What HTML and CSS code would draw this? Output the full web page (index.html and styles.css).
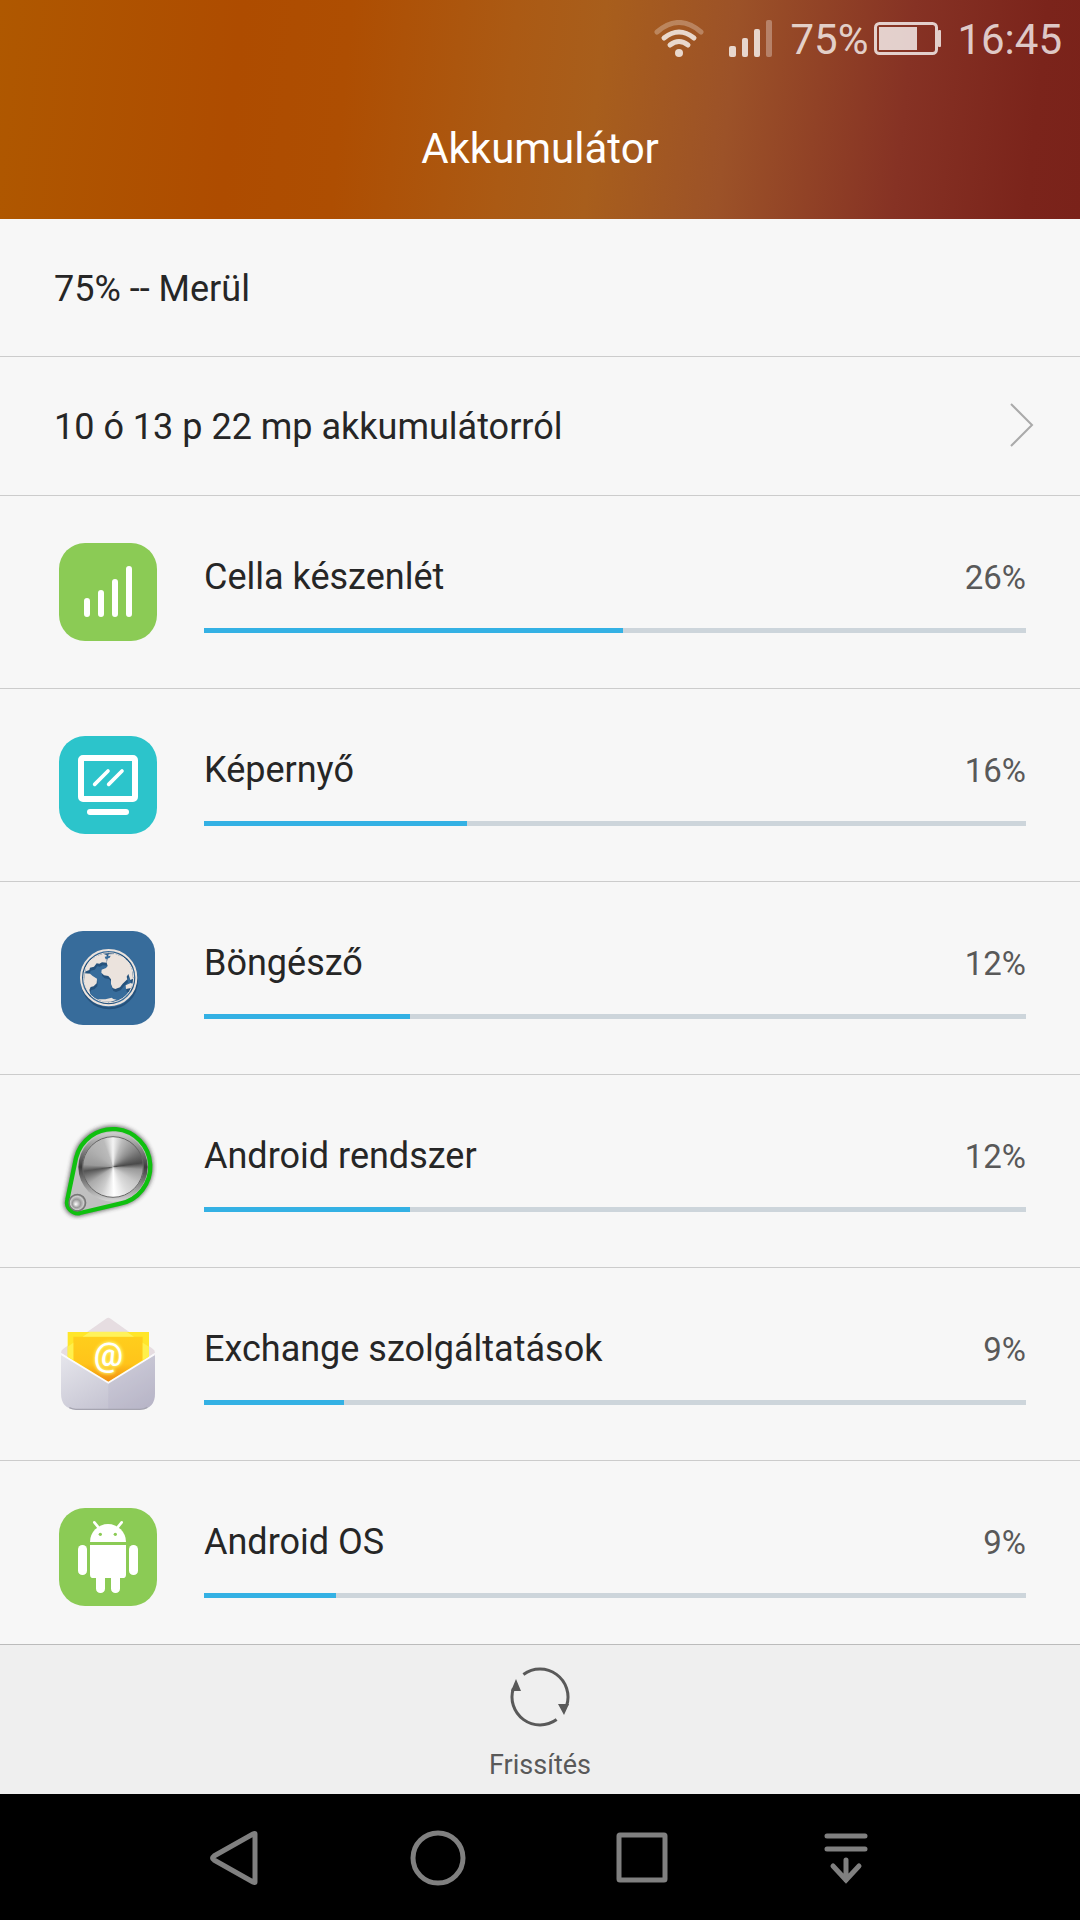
FILE: index.html
```html
<!DOCTYPE html>
<html lang="hu">
<head>
    <meta charset="UTF-8">
    <meta name="viewport" content="width=device-width, initial-scale=1.0">
    <title>Akkumulátor</title>
    <link rel="stylesheet" href="styles.css">
</head>
<body>

<header class="header">
    <div class="status-bar">
        <svg class="wifi" viewBox="0 0 50 38" fill="none" stroke="currentColor" stroke-width="5" stroke-linecap="round">
            <path d="M3 12Q25 -7 47 12" opacity=".35"/>
            <path d="M10 18Q25 6 40 18"/>
            <path d="M16 25Q25 18 34 25"/>
            <circle cx="25" cy="33" r="4" fill="currentColor" stroke="none"/>
        </svg>
        <svg class="signal" viewBox="0 0 43 38" fill="currentColor">
            <rect x="0" y="26" width="7" height="11" rx="2"/>
            <rect x="13" y="18" width="6" height="19" rx="2"/>
            <rect x="25" y="9" width="6" height="28" rx="2"/>
            <rect x="37" y="0" width="6" height="37" rx="2" opacity=".4"/>
        </svg>
        <span class="charge">75%</span>
        <svg class="battery" viewBox="0 0 67 34">
            <rect x="1.5" y="1.5" width="61" height="30" rx="4" fill="none" stroke="currentColor" stroke-width="3"/>
            <rect x="5" y="5" width="38" height="23" fill="currentColor"/>
            <rect x="64" y="8" width="3" height="17" rx="1" fill="currentColor"/>
        </svg>
        <span class="clock">16:45</span>
    </div>
    <h1>Akkumulátor</h1>
</header>

<main class="content">
    <div class="info-row">75% -- Merül</div>
    <a class="info-row history" href="#">
        10 ó 13 p 22 mp akkumulátorról
        <svg class="chevron" viewBox="0 0 24 44" fill="none" stroke="#aaa" stroke-width="2">
            <path d="M1 1L22 22L1 43"/>
        </svg>
    </a>

    <a class="usage-row" href="#">
        <svg class="app-icon" viewBox="0 0 294 294">
            <rect width="294" height="294" rx="78" fill="#8bcb55"/>
            <path d="M84 174V213M126 150V213M168 117V213M210 78V213" stroke="#fff" stroke-width="18" stroke-linecap="round"/>
        </svg>
        <div class="usage">
            <div class="usage-text"><span>Cella készenlét</span><span class="percent">26%</span></div>
            <div class="bar"><div class="bar-fill" style="width: 51%"></div></div>
        </div>
    </a>

    <a class="usage-row" href="#">
        <svg class="app-icon" viewBox="0 0 294 294" stroke-linecap="round">
            <rect width="294" height="294" rx="78" fill="#2cc4cb"/>
            <rect x="66" y="66" width="162" height="123" rx="6" fill="none" stroke="#fff" stroke-width="18"/>
            <path d="M107 145L147 105M149 145L189 105" stroke="#fff" stroke-width="11"/>
            <path d="M93 228H201" stroke="#fff" stroke-width="18"/>
        </svg>
        <div class="usage">
            <div class="usage-text"><span>Képernyő</span><span class="percent">16%</span></div>
            <div class="bar"><div class="bar-fill" style="width: 32%"></div></div>
        </div>
    </a>

    <a class="usage-row" href="#">
        <svg class="app-icon" viewBox="0 0 294 294">
            <defs>
                <g id="globe">
                    <circle cx="206" cy="203" r="83" fill="none" stroke-width="6"/>
                    <circle cx="206" cy="203" r="75" fill="none" stroke-width="3"/>
                    <path stroke="none" d="M136 190L137 172L149 152L168 139L190 131L200 136L200 158L186 157L178 161L170 160L162 170L150 173L148 180L138 184Z"/>
                    <path stroke="none" d="M134 190L150 191L158 198L171 206L170 220L161 229L152 231L148 240L151 252L144 246L137 232L132 215Z"/>
                    <path stroke="none" d="M206 133L226 132L250 142L268 160L277 182L279 206L271 210L265 192L260 200L262 208L248 221L240 232L226 237L218 234L213 222L213 208L205 198L192 196L184 188L185 179L198 174L203 168L200 158Z"/>
                    <path stroke="none" d="M257 226L272 219L278 222L273 234L258 237Z"/>
                    <path stroke="none" d="M172 268L196 268L215 263L220 267L230 269L212 275L190 275Z"/>
                </g>
            </defs>
            <rect x="6" y="6" width="282" height="282" rx="66" fill="#376c9b"/>
            <g transform="translate(-57 -57)">
                <use href="#globe" x="2" y="9" fill="#25527c" stroke="#25527c"/>
                <use href="#globe" fill="#ebe3dd" stroke="#ebe3dd"/>
                <path d="M194 140L212 137L209 143L197 148Z" fill="#376c9b"/>
            </g>
        </svg>
        <div class="usage">
            <div class="usage-text"><span>Böngésző</span><span class="percent">12%</span></div>
            <div class="bar"><div class="bar-fill" style="width: 25%"></div></div>
        </div>
    </a>

    <a class="usage-row" href="#">
        <svg class="app-icon" viewBox="0 0 294 294">
            <defs>
                <filter id="soft"><feGaussianBlur stdDeviation="6"/></filter>
                <linearGradient id="rim" x1="0" y1="0" x2="0" y2="1">
                    <stop offset="0" stop-color="#d0d0d0"/>
                    <stop offset=".5" stop-color="#3c3c3c"/>
                    <stop offset="1" stop-color="#d8d8d8"/>
                </linearGradient>
                <radialGradient id="knob" cx=".5" cy=".5" r=".5" fx=".4" fy=".6">
                    <stop offset="0" stop-color="#fff"/>
                    <stop offset=".5" stop-color="#999"/>
                    <stop offset=".8" stop-color="#ccc"/>
                    <stop offset="1" stop-color="#666"/>
                </radialGradient>
            </defs>
            <g transform="translate(-57 -66)">
                <path d="M106 172A115 115 0 1 1 240 312L120 341A33 33 0 0 1 80 300Z" fill="#333" stroke="#333" stroke-width="14" opacity=".7" filter="url(#soft)"/>
                <path d="M108 174A113 113 0 1 1 240 311L120 339A33 33 0 0 1 82 299Z" fill="#c0c0c0" stroke="#0fc00f" stroke-width="13"/>
                <circle cx="219" cy="201" r="104" fill="url(#rim)"/>
                <foreignObject x="127" y="109" width="184" height="184">
                    <div class="disc"></div>
                </foreignObject>
                <circle cx="219" cy="201" r="91" fill="none" stroke="#666" stroke-width="3"/>
                <circle cx="112" cy="308" r="25" fill="url(#knob)" stroke="#777" stroke-width="4"/>
            </g>
        </svg>
        <div class="usage">
            <div class="usage-text"><span>Android rendszer</span><span class="percent">12%</span></div>
            <div class="bar"><div class="bar-fill" style="width: 25%"></div></div>
        </div>
    </a>

    <a class="usage-row" href="#">
        <svg class="app-icon" viewBox="0 0 294 294">
            <defs>
                <linearGradient id="envelope" x1="0" y1="0" x2="1" y2="1">
                    <stop offset="0" stop-color="#e6e6ec"/>
                    <stop offset="1" stop-color="#b9b7c8"/>
                </linearGradient>
                <linearGradient id="letter" x1="0" y1="0" x2="0" y2="1">
                    <stop offset="0" stop-color="#ffce1c"/>
                    <stop offset=".6" stop-color="#ffc41a"/>
                    <stop offset="1" stop-color="#f08a10"/>
                </linearGradient>
                <filter id="glow"><feGaussianBlur stdDeviation="4"/></filter>
            </defs>
            <g transform="translate(-57 -45)">
                <path d="M63 158Q63 150 70 146L198 56Q205 50 212 56L338 146Q345 150 345 158L205 250Z" fill="#e6dde1"/>
                <path d="M83 96H327V172L205 248L83 172Z" fill="#ffe62a"/>
                <path d="M100 110H308V180L205 246L100 180Z" fill="url(#letter)"/>
                <path d="M150 95H260L282 110H128Z" fill="#fff25a"/>
                <path d="M83 140L100 128V180L83 170ZM327 140L308 128V180L327 170Z" fill="#fff04c"/>
                <text class="at-sign" x="205" y="198" text-anchor="middle" fill="#fff36b" stroke="#fff36b" stroke-width="6" filter="url(#glow)">@</text>
                <text class="at-sign" x="205" y="198" text-anchor="middle" fill="#fff">@</text>
                <path d="M63 162L205 248L345 162V280Q345 328 300 328H108Q63 328 63 280Z" fill="url(#envelope)"/>
                <path d="M205 248L345 162V280Q345 328 300 328H205Z" fill="#a9a7bc" opacity=".2"/>
                <path d="M64 163L205 248L344 163" fill="none" stroke="#fbfafc" stroke-width="5"/>
                <path d="M88 323Q98 328 108 328H300Q312 328 322 322" fill="none" stroke="#a5a4b0" stroke-width="4"/>
            </g>
        </svg>
        <div class="usage">
            <div class="usage-text"><span>Exchange szolgáltatások</span><span class="percent">9%</span></div>
            <div class="bar"><div class="bar-fill" style="width: 17%"></div></div>
        </div>
    </a>

    <a class="usage-row" href="#">
        <svg class="app-icon" viewBox="0 0 294 294">
            <rect width="294" height="294" rx="78" fill="#8bcb55"/>
            <g transform="translate(-57 -54)" fill="#fff">
                <path d="M150 156A54 54 0 0 1 258 156Z"/>
                <path d="M163 97L180 118M245 97L228 118" stroke="#fff" stroke-width="8" stroke-linecap="round"/>
                <circle cx="181" cy="133" r="5" fill="#8bcb55"/>
                <circle cx="226" cy="133" r="5" fill="#8bcb55"/>
                <path d="M150 165H258V254Q258 264 248 264H160Q150 264 150 254Z"/>
                <rect x="114" y="165" width="27" height="90" rx="13"/>
                <rect x="267" y="165" width="27" height="90" rx="13"/>
                <rect x="168" y="240" width="27" height="69" rx="13"/>
                <rect x="213" y="240" width="27" height="69" rx="13"/>
            </g>
        </svg>
        <div class="usage">
            <div class="usage-text"><span>Android OS</span><span class="percent">9%</span></div>
            <div class="bar"><div class="bar-fill" style="width: 16%"></div></div>
        </div>
    </a>
</main>

<footer class="toolbar">
    <button type="button" class="refresh">
        <svg viewBox="0 0 60 60" fill="none" stroke="#595959" stroke-width="3">
            <path d="M13.4 7.5A28 28 0 0 1 56.6 38.8"/>
            <path d="M46.6 52.5A28 28 0 0 1 3.4 21.2"/>
            <path d="M6 12L11 24H1ZM54 48L59 37H48Z" fill="#595959" stroke="none"/>
        </svg>
        Frissítés
    </button>
</footer>

<nav class="nav-bar">
    <button type="button" aria-label="Vissza">
        <svg viewBox="0 0 56 56"><path d="M49 4V52Q49 53 47 52L8 30Q5 28 8 26L47 4Q49 3 49 4Z"/></svg>
    </button>
    <button type="button" aria-label="Kezdőképernyő">
        <svg viewBox="0 0 56 56"><circle cx="28" cy="28" r="25"/></svg>
    </button>
    <button type="button" aria-label="Legutóbbiak">
        <svg viewBox="0 0 56 56"><rect x="5" y="5" width="46" height="45" rx="1"/></svg>
    </button>
    <button type="button" aria-label="Értesítések">
        <svg viewBox="0 0 56 56" stroke-linecap="round"><path d="M9 6H47M9 19H47M28 30V50M15 36L28 50L41 36"/></svg>
    </button>
</nav>

</body>
</html>
```

FILE: styles.css
```css
* {
    box-sizing: border-box;
}
body {
    font-family: Roboto, "Noto Sans", sans-serif;
    background-color: #f7f7f7;
    color: #262626;
    margin: 0;
    height: 100vh;
    display: flex;
    flex-direction: column;
}
a {
    color: inherit;
    text-decoration: none;
}
button {
    font-family: inherit;
    background: none;
    border: none;
    padding: 0;
    cursor: pointer;
}
svg {
    display: block;
    flex-shrink: 0;
}

/* Header */
.header {
    flex-shrink: 0;
    height: 219px;
    background: linear-gradient(96deg, #af5800 0%, #ae4c00 22%, #ae4e02 32%, #ab5a14 47%, #a85e1c 55%, #9c5228 67%, #863224 83%, #7b241b 95%, #7a221a 100%);
}
.status-bar {
    display: flex;
    justify-content: flex-end;
    align-items: center;
    height: 78px;
    padding-right: 18px;
    font-size: 42px;
    color: rgba(255, 255, 255, 0.77);
}
.wifi {
    width: 50px;
    height: 38px;
    margin-right: 25px;
}
.signal {
    width: 43px;
    height: 38px;
    margin-right: 18px;
}
.battery {
    width: 67px;
    height: 34px;
    margin: 0 16px 0 6px;
}
h1 {
    margin: 0;
    text-align: center;
    font-size: 42px;
    font-weight: 400;
    line-height: 142px;
    color: #fff;
}

/* List */
.content {
    flex: 1;
    min-height: 0;
    overflow: hidden;
}
.info-row {
    display: flex;
    justify-content: space-between;
    align-items: center;
    height: 138px;
    padding: 2px 46px 0 54px;
    border-bottom: 1px solid #ccc;
    font-size: 36px;
}
.history {
    height: 139px;
}
.chevron {
    width: 24px;
    height: 44px;
    margin-bottom: 4px;
}
.usage-row {
    display: flex;
    align-items: center;
    gap: 47px;
    height: 193px;
    padding: 0 54px 0 59px;
    border-bottom: 1px solid #ccc;
}
.app-icon {
    width: 98px;
    height: 98px;
}
.usage {
    flex: 1;
    padding-top: 2px;
}
.usage-text {
    display: flex;
    justify-content: space-between;
    align-items: baseline;
    margin-bottom: 26px;
    font-size: 36px;
    line-height: 48px;
}
.percent {
    font-size: 33px;
    color: #595959;
}
.bar {
    height: 5px;
    background-color: #cdd5db;
}
.bar-fill {
    height: 100%;
    background-color: #34b1e4;
}
.disc {
    width: 184px;
    height: 184px;
    border-radius: 50%;
    background: conic-gradient(#f4f4f4 0deg, #bbb 20deg, #8a8a8a 50deg, #4a4a4a 82deg, #999 95deg, #c8c8c8 125deg, #ddd 150deg, #fff 178deg, #ccc 205deg, #aaa 235deg, #555 262deg, #999 275deg, #b0b0b0 310deg, #bbb 340deg, #f4f4f4 360deg);
}
.at-sign {
    font-size: 98px;
    font-weight: 500;
}

/* Bottom */
.toolbar {
    flex-shrink: 0;
    height: 150px;
    border-top: 1px solid #bbb;
    background-color: #efefef;
    display: flex;
    justify-content: center;
}
.refresh {
    display: flex;
    flex-direction: column;
    align-items: center;
    gap: 20px;
    padding: 22px 24px 0;
    font-size: 27px;
    line-height: 36px;
    color: #595959;
}
.refresh svg {
    width: 60px;
    height: 60px;
}
.nav-bar {
    flex-shrink: 0;
    height: 126px;
    padding: 2px 132px 0;
    background-color: #000;
    display: flex;
}
.nav-bar button {
    flex: 1;
    display: flex;
    justify-content: center;
    align-items: center;
}
.nav-bar svg {
    width: 56px;
    height: 56px;
    fill: none;
    stroke: #808080;
    stroke-width: 5;
}
```
